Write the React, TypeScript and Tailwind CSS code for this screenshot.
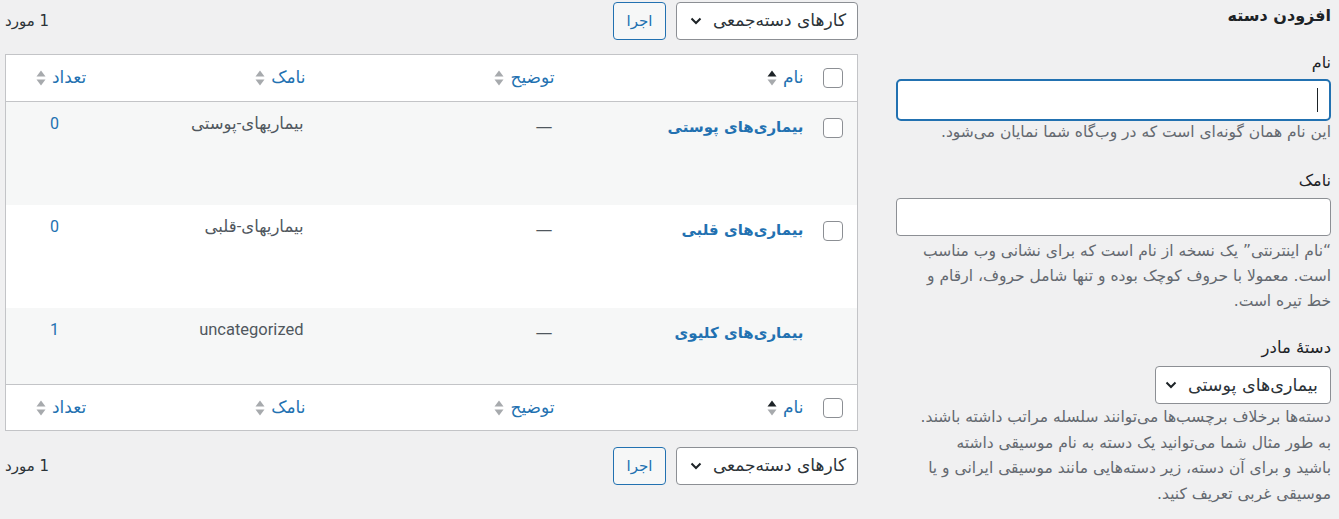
import React from 'react'

const FA = "font-['DejaVu_Sans',sans-serif]"

function SortArrows({ active }: { active?: boolean }) {
  return (
    <svg width="10" height="18" viewBox="0 0 10 18" className="shrink-0">
      <path d="M5 1.5 L9.5 7.5 H0.5 Z" fill={active ? '#1d2327' : '#a7aaad'} />
      <path d="M5 16.5 L9.5 10.5 H0.5 Z" fill="#a7aaad" />
    </svg>
  )
}

function Chevron() {
  return (
    <svg width="12" height="8" viewBox="0 0 12 8" className="shrink-0">
      <path d="M1.5 1.5 L6 6 L10.5 1.5" stroke="#1d2327" strokeWidth="2" fill="none" />
    </svg>
  )
}

function Checkbox() {
  return <span className="block w-[20px] h-[20px] rounded-[4px] border border-[#8c8f94] bg-white" />
}

function SortHead({ label, active }: { label: string; active?: boolean }) {
  return (
    <span className="inline-flex items-center gap-[6px] text-[17px] text-[#2271b1]">
      <span>{label}</span>
      <SortArrows active={active} />
    </span>
  )
}

function HeadRow({ top }: { top?: boolean }) {
  return (
    <tr className={top ? 'h-[47px] border-b border-[#c3c4c7]' : 'h-[46px] border-t border-[#c3c4c7]'}>
      <td className="pr-[14px] align-middle">
        <Checkbox />
      </td>
      <td className="pr-[9px] align-middle">
        <SortHead label="نام" active />
      </td>
      <td className="pr-[8px] align-middle">
        <SortHead label="توضیح" />
      </td>
      <td className="pr-[7px] align-middle">
        <SortHead label="نامک" />
      </td>
      <td className="text-left pl-[30px] align-middle">
        <SortHead label="تعداد" />
      </td>
    </tr>
  )
}

const ROWS = [
  { name: 'بیماری‌های پوستی', slug: 'بیماریهای-پوستی', count: 0, check: true, h: 'h-[103px]', bg: 'bg-[#f6f7f7]' },
  { name: 'بیماری‌های قلبی', slug: 'بیماریهای-قلبی', count: 0, check: true, h: 'h-[103px]', bg: 'bg-white' },
  { name: 'بیماری‌های کلیوی', slug: 'uncategorized', count: 1, check: false, h: 'h-[77px]', bg: 'bg-[#f6f7f7]' },
]

function BulkBar() {
  return (
    <div className="flex items-center h-[38px]">
      <div className="flex items-center justify-between w-[182px] h-[38px] pr-[11px] pl-[13px] rounded-[4px] border border-[#8c8f94] bg-white text-[17px] text-[#2c3338]">
        <span>کارهای دسته‌جمعی</span>
        <Chevron />
      </div>
      <button className="mr-[10px] w-[53px] h-[38px] rounded-[4px] border border-[#2271b1] bg-[#f6f7f7] text-[15px] text-[#2271b1]">
        اجرا
      </button>
      <span className="mr-auto text-[15px] text-[#2c3338]">1 مورد</span>
    </div>
  )
}

export default function App() {
  return (
    <div dir="rtl" className={`${FA} min-h-[519px] bg-[#f0f0f1] flex gap-[38px] pr-[8px] pl-[5px] text-[#1d2327]`}>
      {/* Add category form */}
      <div className="w-[435px] shrink-0">
        <h2 className="mt-[4px] h-[24px] leading-[24px] text-[16px] font-bold">افزودن دسته</h2>

        <label className="block mt-[24px] leading-[22px] text-[16px]">نام</label>
        <div className="mt-[5px] h-[42px] rounded-[5px] border-2 border-[#2271b1] bg-white flex items-center pr-[11px]">
          <span className="block w-px h-[24px] bg-[#1d2327]" />
        </div>
        <p className="leading-[22px] text-[15.5px] text-[#646970]">این نام همان گونه‌ای است که در وب‌گاه شما نمایان می‌شود.</p>

        <label className="block mt-[27px] leading-[22px] text-[16px]">نامک</label>
        <div className="mt-[6px] h-[38px] rounded-[4px] border border-[#8c8f94] bg-white" />
        <p className="mt-[3px] leading-[25px] text-[15.5px] text-[#646970]">
          “نام اینترنتی” یک نسخه از نام است که برای نشانی وب مناسب
          <br />
          است. معمولا با حروف کوچک بوده و تنها شامل حروف، ارقام و
          <br />
          خط تیره است.
        </p>

        <label className="block mt-[23px] leading-[22px] text-[16.5px]">دستهٔ مادر</label>
        <div className="mt-[7px] flex items-center justify-between w-[176px] h-[38px] pr-[12px] pl-[9px] rounded-[4px] border border-[#8c8f94] bg-white text-[17.5px] text-[#2c3338]">
          <span>بیماری‌های پوستی</span>
          <Chevron />
        </div>
        <p className="mt-[1px] leading-[25.5px] text-[15.5px] text-[#646970]">
          دسته‌ها برخلاف برچسب‌ها می‌توانند سلسله مراتب داشته باشند.
          <br />
          به طور مثال شما می‌توانید یک دسته به نام موسیقی داشته
          <br />
          باشید و برای آن دسته، زیر دسته‌هایی مانند موسیقی ایرانی و یا
          <br />
          موسیقی غربی تعریف کنید.
        </p>
      </div>

      {/* Categories list */}
      <div className="flex-1 pt-[2px]">
        <BulkBar />

        <table className="mt-[14px] w-full table-fixed border-collapse border border-[#c3c4c7] bg-white">
          <colgroup>
            <col className="w-[45px]" />
            <col className="w-[250px]" />
            <col className="w-[250px]" />
            <col className="w-[200px]" />
            <col />
          </colgroup>
          <thead>
            <HeadRow top />
          </thead>
          <tbody>
            {ROWS.map(r => (
              <tr key={r.name} className={`${r.h} ${r.bg}`}>
                <td className="pr-[14px] pt-[16px] align-top">{r.check && <Checkbox />}</td>
                <td className="pr-[9px] pt-[13px] align-top leading-[24px] text-[15px] font-bold text-[#2271b1]">{r.name}</td>
                <td className="pr-[10px] pt-[12px] align-top leading-[24px] text-[17px] text-[#50575e]">—</td>
                <td className="pr-[9px] pt-[10px] align-top leading-[24px] text-[16.5px] text-[#50575e] font-['Roboto','DejaVu_Sans',sans-serif]">{r.slug}</td>
                <td className="pt-[10px] pl-[44px] text-left align-top leading-[24px] text-[16px] text-[#2271b1] font-['Roboto',sans-serif]">
                  {r.count}
                </td>
              </tr>
            ))}
          </tbody>
          <tfoot>
            <HeadRow />
          </tfoot>
        </table>

        <div className="mt-[16px]">
          <BulkBar />
        </div>
      </div>
    </div>
  )
}
